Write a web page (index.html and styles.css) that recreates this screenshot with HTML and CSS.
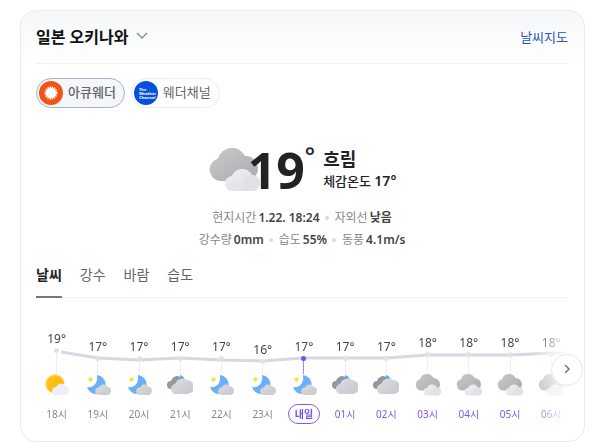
FILE: index.html
```html
<!DOCTYPE html>
<html lang="ko">
<head>
    <meta charset="UTF-8">
    <meta name="viewport" content="width=device-width, initial-scale=1.0">
    <title>일본 오키나와 날씨</title>
    <link rel="stylesheet" href="styles.css">
</head>
<body>
    <!-- 날씨 아이콘 -->
    <svg class="icon-defs" aria-hidden="true">
        <defs>
            <linearGradient id="g-dark" x1="0" y1="0" x2="1" y2="1">
                <stop offset="0" stop-color="#c9cacc"/><stop offset="1" stop-color="#a9abad"/>
            </linearGradient>
            <linearGradient id="g-light" x1="0" y1="0" x2="1" y2="1">
                <stop offset="0" stop-color="#f1f2f5"/><stop offset="1" stop-color="#d9dbe0"/>
            </linearGradient>
            <linearGradient id="g-mid" x1="0" y1="0" x2="1" y2="1">
                <stop offset="0" stop-color="#dcdde0"/><stop offset="1" stop-color="#c6c7cb"/>
            </linearGradient>
            <linearGradient id="g-moon" x1="0" y1="0" x2="1" y2="1">
                <stop offset="0" stop-color="#5fa8f5"/><stop offset="1" stop-color="#78b6fb"/>
            </linearGradient>
            <linearGradient id="g-sun" x1="0" y1="0" x2="1" y2="1">
                <stop offset="0" stop-color="#ffcd1c"/><stop offset="1" stop-color="#ffab0a"/>
            </linearGradient>
        </defs>
        <symbol id="cloudy" viewBox="0 0 52 44">
            <path d="M12 33a11.500 11.500 0 0 1-2-22.500A14.500 14.500 0 0 1 37 8a12.500 12.500 0 0 1 1 25z" fill="url(#g-dark)"/>
            <path d="M25 43a7.500 7.500 0 0 1-1-15A11 11 0 0 1 44 27a8 8 0 0 1 0 16z" fill="url(#g-light)"/>
            <circle cx="44" cy="35" r="8" fill="#dfe1e5"/>
        </symbol>
        <symbol id="sun" viewBox="0 0 26 22">
            <circle cx="11" cy="10" r="10" fill="#ffe9a3"/>
            <circle cx="11" cy="10" r="9" fill="url(#g-sun)"/>
            <path d="M12 21a4 4 0 0 1 0-8 5 5 0 0 1 9-1 4.500 4.500 0 0 1 0 9z" fill="#eff0f7"/>
        </symbol>
        <symbol id="moon" viewBox="0 0 26 22">
            <path d="M12 1A9.500 9.500 0 1 1 2 13Q8 14 11 9Q13 5 12 1z" fill="url(#g-moon)"/>
            <path d="M5.500 3l1 1.500 1.500 1-1.500 1-1 1.500-1-1.500-1.500-1 1.500-1z" fill="#ffdc2e" stroke="#ffdc2e" stroke-width="0.500"/>
            <path d="M14 21a3.500 3.500 0 0 1 0-7.500 5 5 0 0 1 8.500-1 4.300 4.300 0 0 1-1 8.500z" fill="url(#g-mid)"/>
        </symbol>
        <symbol id="overcast" viewBox="0 0 26 22">
            <path d="M4 15a4 4 0 0 1 0-8 6 6 0 0 1 9-4l2 5-8 8z" fill="#94979b"/>
            <path d="M13 1q4 1 5 5l-6 3-6 3-1-2q3 0 5-3 3 0 3-6z" fill="#5eaafa"/>
            <path d="M10 20a5 5 0 0 1-2-10 8 8 0 0 1 12-4 7 7 0 0 1 0 14z" fill="url(#g-mid)"/>
        </symbol>
    </svg>

    <section class="weather-card">
        <header class="card-header">
            <button class="region-btn" type="button">
                일본 오키나와
                <svg class="chevron" viewBox="0 0 12 8" aria-hidden="true"><path d="M1 1l5 5 5-5"/></svg>
            </button>
            <a class="map-link" href="#">날씨지도</a>
        </header>

        <div class="providers">
            <button class="provider selected" type="button">
                <svg class="provider-logo" viewBox="0 0 24 24" aria-hidden="true">
                    <circle cx="12" cy="12" r="12" fill="#f05514"/>
                    <circle cx="12" cy="12" r="5.500" fill="none" stroke="#fff" stroke-width="2" stroke-dasharray="1.400 0.760"/>
                    <circle cx="12" cy="12" r="5" fill="#fff"/>
                </svg>
                아큐웨더
            </button>
            <button class="provider" type="button">
                <svg class="provider-logo" viewBox="0 0 24 24" aria-hidden="true">
                    <circle cx="12" cy="12" r="12" fill="#0550dc"/>
                    <text class="logo-text" x="5" y="10">The</text>
                    <text class="logo-text" x="5" y="14">Weather</text>
                    <text class="logo-text" x="5" y="18">Channel</text>
                </svg>
                웨더채널
            </button>
        </div>

        <div class="current">
            <svg class="current-icon" aria-hidden="true"><use href="#cloudy"/></svg>
            <strong class="current-temp">19<span class="degree">°</span></strong>
            <div class="current-text">
                <strong class="current-state">흐림</strong>
                <span class="feels">체감온도 <b>17°</b></span>
            </div>
        </div>

        <div class="details">
            <ul class="detail-row">
                <li>현지시간 <b>1.22. 18:24</b></li>
                <li>자외선 <b>낮음</b></li>
            </ul>
            <ul class="detail-row">
                <li>강수량 <b>0mm</b></li>
                <li>습도 <b>55%</b></li>
                <li>동풍 <b>4.1m/s</b></li>
            </ul>
        </div>

        <nav class="tabs">
            <button class="tab active" type="button">날씨</button>
            <button class="tab" type="button">강수</button>
            <button class="tab" type="button">바람</button>
            <button class="tab" type="button">습도</button>
        </nav>

        <div class="forecast">
            <div class="hours-view">
                <svg class="temp-line" viewBox="0 0 532 20" preserveAspectRatio="none" aria-hidden="true">
                    <path d="M25 4L62 10 103 12 144 10 185 12 226 13 267 10 350 10 391 7 474 7 515 5 532 5"/>
                </svg>
                <ol class="hours">
                    <li class="hour t19"><div class="reading">19°</div><svg class="hour-icon"><use href="#sun"/></svg><span class="time">18시</span></li>
                    <li class="hour t17"><div class="reading">17°</div><svg class="hour-icon"><use href="#moon"/></svg><span class="time">19시</span></li>
                    <li class="hour t17"><div class="reading">17°</div><svg class="hour-icon"><use href="#moon"/></svg><span class="time">20시</span></li>
                    <li class="hour t17"><div class="reading">17°</div><svg class="hour-icon"><use href="#overcast"/></svg><span class="time">21시</span></li>
                    <li class="hour t17"><div class="reading">17°</div><svg class="hour-icon"><use href="#moon"/></svg><span class="time">22시</span></li>
                    <li class="hour t16"><div class="reading">16°</div><svg class="hour-icon"><use href="#moon"/></svg><span class="time">23시</span></li>
                    <li class="hour t17 midnight"><div class="reading">17°</div><svg class="hour-icon"><use href="#moon"/></svg><span class="time">내일</span></li>
                    <li class="hour t17 next"><div class="reading">17°</div><svg class="hour-icon"><use href="#overcast"/></svg><span class="time">01시</span></li>
                    <li class="hour t17 next"><div class="reading">17°</div><svg class="hour-icon"><use href="#overcast"/></svg><span class="time">02시</span></li>
                    <li class="hour t18 next"><div class="reading">18°</div><svg class="hour-icon"><use href="#cloudy"/></svg><span class="time">03시</span></li>
                    <li class="hour t18 next"><div class="reading">18°</div><svg class="hour-icon"><use href="#cloudy"/></svg><span class="time">04시</span></li>
                    <li class="hour t18 next"><div class="reading">18°</div><svg class="hour-icon"><use href="#cloudy"/></svg><span class="time">05시</span></li>
                    <li class="hour t18 next"><div class="reading">18°</div><svg class="hour-icon"><use href="#cloudy"/></svg><span class="time">06시</span></li>
                </ol>
            </div>
            <button class="next-btn" type="button" aria-label="다음">
                <svg viewBox="0 0 8 12" aria-hidden="true"><path d="M2 2l4 4-4 4"/></svg>
            </button>
        </div>
    </section>
</body>
</html>
```
FILE: styles.css
```css
* {
    margin: 0;
    padding: 0;
    box-sizing: border-box;
}

body {
    padding: 10px 15px 7px 20px;
    background: #fff;
    font-family: "Noto Sans", "Noto Sans CJK KR", sans-serif;
    font-size: 12px;
    color: #222;
}

button {
    border: none;
    background: none;
    font-family: inherit;
    color: inherit;
    cursor: pointer;
}

ul, ol {
    list-style: none;
}

.icon-defs {
    position: absolute;
    width: 0;
    height: 0;
}

.weather-card {
    padding: 0 16px 17px 15px;
    border: 1px solid #e9ebee;
    border-radius: 16px;
    background: linear-gradient(180deg, #f5f7f9 0, #fff 52px);
}

/* 상단 지역명 */
.card-header {
    display: flex;
    justify-content: space-between;
    align-items: center;
    height: 53px;
    padding-bottom: 2px;
    border-bottom: 1px solid #f0f1f3;
}

.region-btn {
    display: flex;
    align-items: center;
    gap: 8px;
    font-size: 16px;
    font-weight: bold;
    color: #111;
}

.chevron {
    width: 12px;
    height: 8px;
    fill: none;
    stroke: #888;
    stroke-width: 1.3;
}

.map-link {
    font-size: 13px;
    color: #2456b8;
    text-decoration: none;
}

/* 예보사 선택 */
.providers {
    display: flex;
    gap: 6px;
    margin-top: 14px;
}

.provider {
    display: flex;
    align-items: center;
    gap: 5px;
    height: 30px;
    padding: 0 8px 2px 2px;
    border: 1px solid #ebedf0;
    border-radius: 15px;
    font-size: 13px;
    line-height: 24px;
    color: #666;
}

.provider.selected {
    border-color: #a4b4d0;
    background: #f4f6f9;
    font-weight: 500;
}

.provider-logo {
    width: 24px;
    height: 24px;
    margin-top: 2px;
}

.logo-text {
    font-size: 4px;
    font-weight: bold;
    fill: #fff;
}

/* 현재 날씨 */
.current {
    display: flex;
    justify-content: center;
    align-items: center;
    height: 56px;
    margin-top: 34px;
}

.current-icon {
    width: 52px;
    height: 44px;
}

.current-temp {
    display: flex;
    margin-left: -12px;
    font-family: "Open Sans", sans-serif;
    font-size: 50px;
    line-height: 56px;
}

.degree {
    font-size: 24px;
    font-weight: 600;
    line-height: 28px;
}

.current-text {
    display: flex;
    flex-direction: column;
    margin-left: 8px;
}

.current-state {
    font-size: 18px;
    line-height: 22px;
}

.feels {
    font-size: 13px;
    font-weight: 500;
    line-height: 22px;
}

.feels b {
    font-size: 14px;
    font-weight: 600;
}

.details {
    margin-top: 9px;
}

.detail-row {
    display: flex;
    justify-content: center;
    line-height: 22px;
    color: #888;
}

.detail-row li {
    display: flex;
    align-items: center;
    gap: 2px;
}

.detail-row li + li::before {
    content: "";
    width: 4px;
    height: 4px;
    margin: 0 4px 0 5px;
    border-radius: 50%;
    background: #d9dbde;
}

.detail-row b {
    font-weight: 600;
    color: #444;
}

/* 탭 */
.tabs {
    display: flex;
    gap: 18px;
    margin-top: 8px;
    border-bottom: 1px solid #f0f1f3;
}

.tab {
    height: 39px;
    padding-bottom: 9px;
    margin-bottom: -1px;
    font-size: 14px;
    color: #666;
}

.tab.active {
    padding-bottom: 7px;
    border-bottom: 2px solid #777;
    font-weight: bold;
    color: #222;
}

/* 시간별 예보 */
.forecast {
    position: relative;
    margin-top: 32px;
}

.hours-view {
    position: relative;
    overflow: hidden;
    -webkit-mask-image: linear-gradient(90deg, #000 93%, transparent);
    mask-image: linear-gradient(90deg, #000 93%, transparent);
}

.temp-line {
    position: absolute;
    top: 18px;
    left: 0;
    width: 100%;
    height: 20px;
    fill: none;
    stroke: #d3dae2;
    stroke-width: 3;
}

.hours {
    position: relative;
    display: flex;
}

.hour {
    flex: 0 0 7.75%;
    display: flex;
    flex-direction: column;
    align-items: center;
    height: 94px;
    --dot: #dfe3e8;
    --stem: #eceef1;
}

.reading {
    display: flex;
    flex-direction: column;
    align-items: center;
    flex: 1;
    line-height: 18px;
    color: #444;
}

.reading::before {
    content: "";
    width: 5px;
    height: 5px;
    order: 1;
    border-radius: 50%;
    background: var(--dot);
}

.reading::after {
    content: "";
    width: 1px;
    flex: 1;
    order: 2;
    background: var(--stem);
}

/* 기온이 낮을수록 아래로 */
.t18 .reading { padding-top: 4px; }
.t17 .reading { padding-top: 8px; }
.t16 .reading { padding-top: 11px; }

.hour-icon {
    width: 26px;
    height: 22px;
}

.time {
    height: 20px;
    margin-top: 8px;
    padding: 0 6px;
    font-size: 10px;
    line-height: 20px;
    white-space: nowrap;
    color: #888;
}

.next .time {
    color: #7c5cf0;
}

.midnight {
    --dot: #7150f0;
    --stem: #a08af5;
}

.midnight .time {
    border: 1px solid #7c5cf0;
    border-radius: 10px;
    line-height: 18px;
    font-weight: bold;
    color: #7150f0;
}

.next-btn {
    position: absolute;
    top: 24px;
    right: -15px;
    width: 32px;
    height: 32px;
    border: 1px solid #e6e8eb;
    border-radius: 50%;
    background: #fff;
}

.next-btn svg {
    width: 8px;
    height: 12px;
    fill: none;
    stroke: #777;
    stroke-width: 1.5;
}
```
